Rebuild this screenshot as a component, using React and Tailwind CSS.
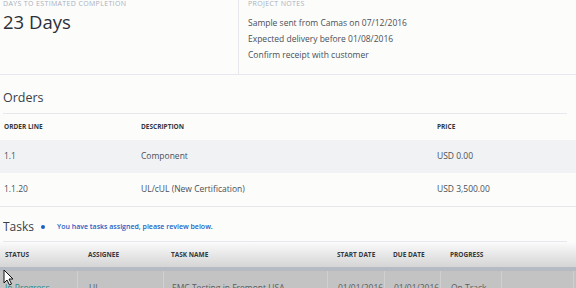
import React from 'react';

const orders = [
  { line: '1.1', desc: 'Component', price: 'USD 0.00', shade: true },
  { line: '1.1.20', desc: 'UL/cUL (New Certification)', price: 'USD 3,500.00', shade: false },
];

const notes = [
  'Sample sent from Camas on 07/12/2016',
  'Expected delivery before 01/08/2016',
  'Confirm receipt with customer',
];

const taskCols = 'grid grid-cols-[77px_86px_164px_57px_56px_61px_72px_1fr]';

const App = () => {
  return (
    <div className="relative w-[576px] h-[288px] overflow-hidden bg-[#fcfcfb] font-['Open_Sans',sans-serif] text-[#4a4f57]">
      {/* Summary */}
      <div className="flex h-[75px] border-b border-[#e7e8ee]">
        <div className="w-[239px] border-r border-[#e7e8ee] pl-[3px]">
          <div className="text-[7px] leading-[7px] uppercase tracking-[0.05em] text-[#a9b1bd]">Days to Estimated Completion</div>
          <div className="mt-[5px] text-[18.5px] leading-[20px] text-[#2b3038]">23 Days</div>
        </div>
        <div className="flex-1 pl-[9px]">
          <div className="text-[7px] leading-[7px] uppercase tracking-[0.05em] text-[#a9b1bd]">Project Notes</div>
          <div className="mt-[8px] text-[8.5px] leading-[16px]">
            {notes.map((n) => (
              <div key={n}>{n}</div>
            ))}
          </div>
        </div>
      </div>

      {/* Orders */}
      <div className="px-[3px] pr-[9px] pt-[15px]">
        <h2 className="text-[12.5px] leading-[16px] text-[#3a3f48] pb-[7px] border-b border-[#e6e8ee]">Orders</h2>
      </div>
      <div className="text-[8.5px]">
        <div className="flex h-[26px] items-center text-[6.5px] font-bold uppercase text-[#333840]">
          <div className="w-[141px] pl-[4px]">Order Line</div>
          <div className="w-[296px]">Description</div>
          <div className="flex-1">Price</div>
        </div>
        {orders.map((o) => (
          <div key={o.line} className={`flex h-[33px] items-center ${o.shade ? 'bg-[#f1f2f4]' : ''}`}>
            <div className="w-[141px] pl-[4px]">{o.line}</div>
            <div className="w-[296px]">{o.desc}</div>
            <div className="flex-1">{o.price}</div>
          </div>
        ))}
        <div className="border-t border-[#e6e8ee]" />
      </div>

      {/* Tasks */}
      <div className="px-[3px] pr-[9px] pt-[12px]">
        <div className="flex items-center pb-[6px] border-b border-[#e6e8ee]">
          <h2 className="text-[12px] leading-[16px] text-[#3a3f48]">Tasks</h2>
          <span className="ml-[7px] w-[4px] h-[4px] rounded-full bg-[#1d5fc4]" />
          <span className="ml-[12px] text-[7px] font-semibold text-[#1d5fc4]">You have tasks assigned, please review below.</span>
        </div>
      </div>
      <div className={`${taskCols} h-[25px] items-center bg-linear-to-b from-[#fbfbfb] to-[#d5d5d5] text-[6.5px] font-bold uppercase text-[#333840]`}>
        <div className="pl-[5px]">Status</div>
        <div className="pl-[11px]">Assignee</div>
        <div className="pl-[8px]">Task Name</div>
        <div className="pl-[10px]">Start Date</div>
        <div className="pl-[9px]">Due Date</div>
        <div className="pl-[10px]">Progress</div>
        <div />
        <div />
      </div>
      <div className={`${taskCols} h-[33px] border-t-[4px] border-[#b6bac2] bg-[#c3c3c3] text-[8.5px] text-[#5a5d62]`}>
        <div className="pl-[5px] pt-[11px] text-[#2f8c8c] underline">In Progress</div>
        <div className="pl-[11px] pt-[11px] border-l border-[#d0d0d0]">UL</div>
        <div className="pl-[8px] pt-[11px] border-l border-[#d0d0d0]">EMC Testing in Fremont USA</div>
        <div className="pl-[10px] pt-[11px] border-l border-[#d0d0d0]">01/01/2016</div>
        <div className="pl-[9px] pt-[11px] border-l border-[#d0d0d0]">01/01/2016</div>
        <div className="pl-[10px] pt-[11px] border-l border-[#d0d0d0]">On Track</div>
        <div className="border-l border-[#d0d0d0]" />
        <div className="border-l border-[#d0d0d0]" />
      </div>

      {/* mouse cursor */}
      <svg className="absolute left-[3px] top-[269px]" width="11" height="17" viewBox="0 0 11 17">
        <path d="M1 1 L1 14 L4 11 L6.5 16 L8.5 15 L6 10 L10 10 Z" fill="#ffffff" stroke="#111111" strokeWidth="1" strokeLinejoin="round" />
      </svg>
    </div>
  );
};

export default App;
